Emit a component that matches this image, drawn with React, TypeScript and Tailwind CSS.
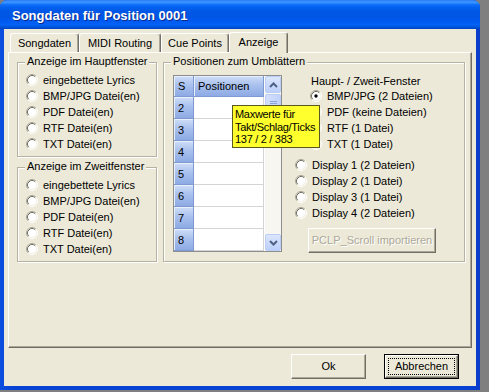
import React from "react";

function Radio({ checked }: { checked?: boolean }) {
  return (
    <svg width="12" height="12" viewBox="0 0 12 12" className="shrink-0">
      <circle cx="6" cy="6" r="5" fill="#fff" />
      <path d="M2.11 9.89A5.5 5.5 0 0 1 9.89 2.11" stroke="#ACA899" fill="none" />
      <path d="M9.89 2.11A5.5 5.5 0 0 1 2.11 9.89" stroke="#fff" fill="none" />
      <path d="M2.82 9.18A4.5 4.5 0 0 1 9.18 2.82" stroke="#716F64" fill="none" />
      <path d="M9.18 2.82A4.5 4.5 0 0 1 2.82 9.18" stroke="#F1EFE2" fill="none" />
      {checked && <circle cx="6" cy="6" r="1.7" fill="#000" />}
    </svg>
  );
}

function RadioRow({ label, checked, className = "" }: { label: string; checked?: boolean; className?: string }) {
  return (
    <div className={`flex items-center h-[16px] gap-[5px] ${className}`}>
      <Radio checked={checked} />
      <span className="leading-[13px] whitespace-nowrap">{label}</span>
    </div>
  );
}

function Group({ title, className = "", children }: { title: string; className?: string; children?: React.ReactNode }) {
  return (
    <div className={`relative border border-[#B5B2A2] shadow-[inset_1px_1px_0_#fff,1px_1px_0_#fff] ${className}`}>
      <span className="absolute -top-[8px] left-[7px] px-[2px] bg-[#ECE9D8] leading-[13px] whitespace-nowrap">{title}</span>
      {children}
    </div>
  );
}

function Chevron({ up }: { up?: boolean }) {
  return (
    <svg width="9" height="6" viewBox="0 0 9 6">
      <path d={up ? "M1 5L4.5 1.5L8 5" : "M1 1L4.5 4.5L8 1"} stroke="#4D6185" strokeWidth="2" fill="none" />
    </svg>
  );
}

const blueCell =
  "bg-[linear-gradient(to_bottom,#D0DEF7,#A9C1EE_45%,#8DAAE4)] border-r border-b border-[#7F9AD2] shadow-[inset_1px_1px_0_#E8EFFC]";

function Table() {
  const rows = ["2", "3", "4", "5", "6", "7", "8"];
  return (
    <div className="w-[109px] h-[177px] border border-[#8E8E8E] bg-white flex mt-[1px] shrink-0">
      <div className="w-[90px] flex flex-col">
        <div className="flex h-[21px]">
          <div className={`w-[20px] flex items-center pl-[4px] pt-[1px] ${blueCell}`}>S</div>
          <div className={`w-[70px] flex items-center pl-[4px] pt-[1px] ${blueCell}`}>Positionen</div>
        </div>
        {rows.map((r) => (
          <div key={r} className="flex h-[22px]">
            <div className={`w-[20px] flex items-center pl-[4px] pt-[2px] ${blueCell}`}>{r}</div>
            <div className="w-[70px] border-r border-b border-[#D4D4D4]" />
          </div>
        ))}
      </div>
      <div className="w-[1px]" />
      <div className="w-[16px] flex flex-col justify-between bg-[#F7F6F1]">
        <div className="flex flex-col">
          <div className="h-[17px] rounded-[2px] border border-[#BACDF5] bg-[linear-gradient(to_bottom,#DCE6FD,#BBCFFA)] flex items-center justify-center">
            <Chevron up />
          </div>
          <div className="h-[20px] mt-[1px] rounded-[2px] border border-[#BACDF5] bg-[linear-gradient(to_right,#D3DFFC,#C0D2FA)] flex flex-col items-center justify-center gap-[1px]">
            <div className="w-[7px] h-[1px] bg-[#8CA4DC]" />
            <div className="w-[7px] h-[1px] bg-[#8CA4DC]" />
            <div className="w-[7px] h-[1px] bg-[#8CA4DC]" />
            <div className="w-[7px] h-[1px] bg-[#8CA4DC]" />
          </div>
        </div>
        <div className="h-[17px] rounded-[2px] border border-[#BACDF5] bg-[linear-gradient(to_bottom,#DCE6FD,#BBCFFA)] flex items-center justify-center">
          <Chevron />
        </div>
      </div>
    </div>
  );
}

export default function App() {
  return (
    <div className="w-[489px] h-[392px] bg-[#7F7F7F] font-['Liberation_Sans',Arial,sans-serif] text-[11px] text-black overflow-hidden">
      <div className="w-[480px] h-[390px] rounded-t-[7px] bg-[#0A48D8] flex flex-col overflow-hidden">
        {/* Title bar */}
        <div className="h-[29px] shrink-0 flex items-center pl-[12px] pt-[3px] bg-[linear-gradient(to_bottom,#2C7BFA_0%,#3D95FF_8%,#0E70FB_16%,#0260EE_26%,#0057E5_40%,#0055E5_60%,#005BF3_75%,#0263F5_86%,#0052D8_94%,#0044C0_100%)]">
          <span className="text-white font-bold text-[13px] leading-[16px] [text-shadow:1px_1px_0_#0A2A8C]">
            Songdaten für Position 0001
          </span>
        </div>
        {/* Frame body */}
        <div className="flex-1 px-[4px] pb-[4px] bg-[linear-gradient(to_right,#0A4FE0,#0842D4_3%,#0842D4_97%,#0A3CC8)]">
          <div className="h-full bg-[#ECE9D8] flex flex-col pt-[3px]">
            {/* Tabs */}
            <div className="h-[20px] flex items-end pl-[6px]">
              {[
                { t: "Songdaten", w: "w-[69px]" },
                { t: "MIDI Routing", w: "w-[82px]" },
                { t: "Cue Points", w: "w-[68px]" },
              ].map((tab) => (
                <div
                  key={tab.t}
                  className={`${tab.w} h-[19px] rounded-t-[3px] border-l border-t border-r border-l-white border-t-white border-r-[#716F64] shadow-[inset_-1px_0_0_#ACA899] flex justify-center pt-[3px] leading-[13px] whitespace-nowrap`}
                >
                  {tab.t}
                </div>
              ))}
              <div className="w-[59px] h-[21px] -mb-[1px] relative z-10 bg-[#ECE9D8] rounded-t-[3px] border-l border-t border-r border-l-white border-t-white border-r-[#716F64] shadow-[inset_-1px_0_0_#ACA899] flex justify-center pt-[3px] leading-[13px]">
                Anzeige
              </div>
            </div>
            {/* Panel */}
            <div className="h-[296px] mx-[4px] border border-t-white border-l-white border-r-[#716F64] border-b-[#716F64] shadow-[inset_-1px_-1px_0_#ACA899] flex pl-[8px] pt-[9px]">
              <div className="w-[140px] flex flex-col gap-[10px]">
                <Group title="Anzeige im Hauptfenster" className="h-[95px] pl-[8px] pt-[9px]">
                  <RadioRow label="eingebettete Lyrics" />
                  <RadioRow label="BMP/JPG Datei(en)" />
                  <RadioRow label="PDF Datei(en)" />
                  <RadioRow label="RTF Datei(en)" />
                  <RadioRow label="TXT Datei(en)" />
                </Group>
                <Group title="Anzeige im Zweitfenster" className="h-[95px] pl-[8px] pt-[9px]">
                  <RadioRow label="eingebettete Lyrics" />
                  <RadioRow label="BMP/JPG Datei(en)" />
                  <RadioRow label="PDF Datei(en)" />
                  <RadioRow label="RTF Datei(en)" />
                  <RadioRow label="TXT Datei(en)" />
                </Group>
              </div>
              <Group title="Positionen zum Umblättern" className="ml-[6px] w-[302px] h-[200px] flex pl-[9px] pt-[11px]">
                <Table />
                <div className="ml-[13px] flex flex-col">
                  <div className="h-[14px] ml-[16px] flex items-center leading-[13px] whitespace-nowrap">Haupt- / Zweit-Fenster</div>
                  <RadioRow className="ml-[15px] gap-[4px]" label="BMP/JPG (2 Dateien)" checked />
                  <RadioRow className="ml-[15px] gap-[4px]" label="PDF (keine Dateien)" />
                  <RadioRow className="ml-[15px] gap-[4px]" label="RTF (1 Datei)" />
                  <RadioRow className="ml-[15px] gap-[4px]" label="TXT (1 Datei)" />
                  <div className="h-[5px]" />
                  <RadioRow className="gap-[4px]" label="Display 1 (2 Dateien)" />
                  <RadioRow className="gap-[4px]" label="Display 2 (1 Datei)" />
                  <RadioRow className="gap-[4px]" label="Display 3 (1 Datei)" />
                  <RadioRow className="gap-[4px]" label="Display 4 (2 Dateien)" />
                  <div className="mt-[7px] ml-[13px] w-[128px] h-[25px] border border-t-white border-l-white border-r-[#716F64] border-b-[#716F64] shadow-[inset_-1px_-1px_0_#ACA899] flex items-center justify-center text-[#ACA899] [text-shadow:1px_1px_0_#fff] whitespace-nowrap">
                    PCLP_Scroll importieren
                  </div>
                </div>
                <div className="absolute left-[68px] top-[42px] w-[88px] h-[43px] bg-[#FFFF2E] border border-[#5A5A20] pl-[2px] pt-[2px] leading-[12.5px] tracking-[-0.3px] z-20 whitespace-nowrap overflow-hidden">
                  <div>Maxwerte für</div>
                  <div>Takt/Schlag/Ticks</div>
                  <div>137 / 2 / 383</div>
                </div>
              </Group>
            </div>
            {/* Buttons */}
            <div className="mt-[6px] flex justify-end gap-[18px] pr-[17px]">
              <div className="w-[75px] h-[25px] border border-t-white border-l-white border-r-[#716F64] border-b-[#716F64] shadow-[inset_-1px_-1px_0_#ACA899] flex items-center justify-center">
                Ok
              </div>
              <div className="w-[75px] h-[25px] border border-black">
                <div className="w-full h-full border border-t-white border-l-white border-r-[#716F64] border-b-[#716F64] shadow-[inset_-1px_-1px_0_#ACA899] p-[2px]">
                  <div className="w-full h-full border border-dotted border-black flex items-center justify-center">
                    Abbrechen
                  </div>
                </div>
              </div>
            </div>
          </div>
        </div>
      </div>
    </div>
  );
}
